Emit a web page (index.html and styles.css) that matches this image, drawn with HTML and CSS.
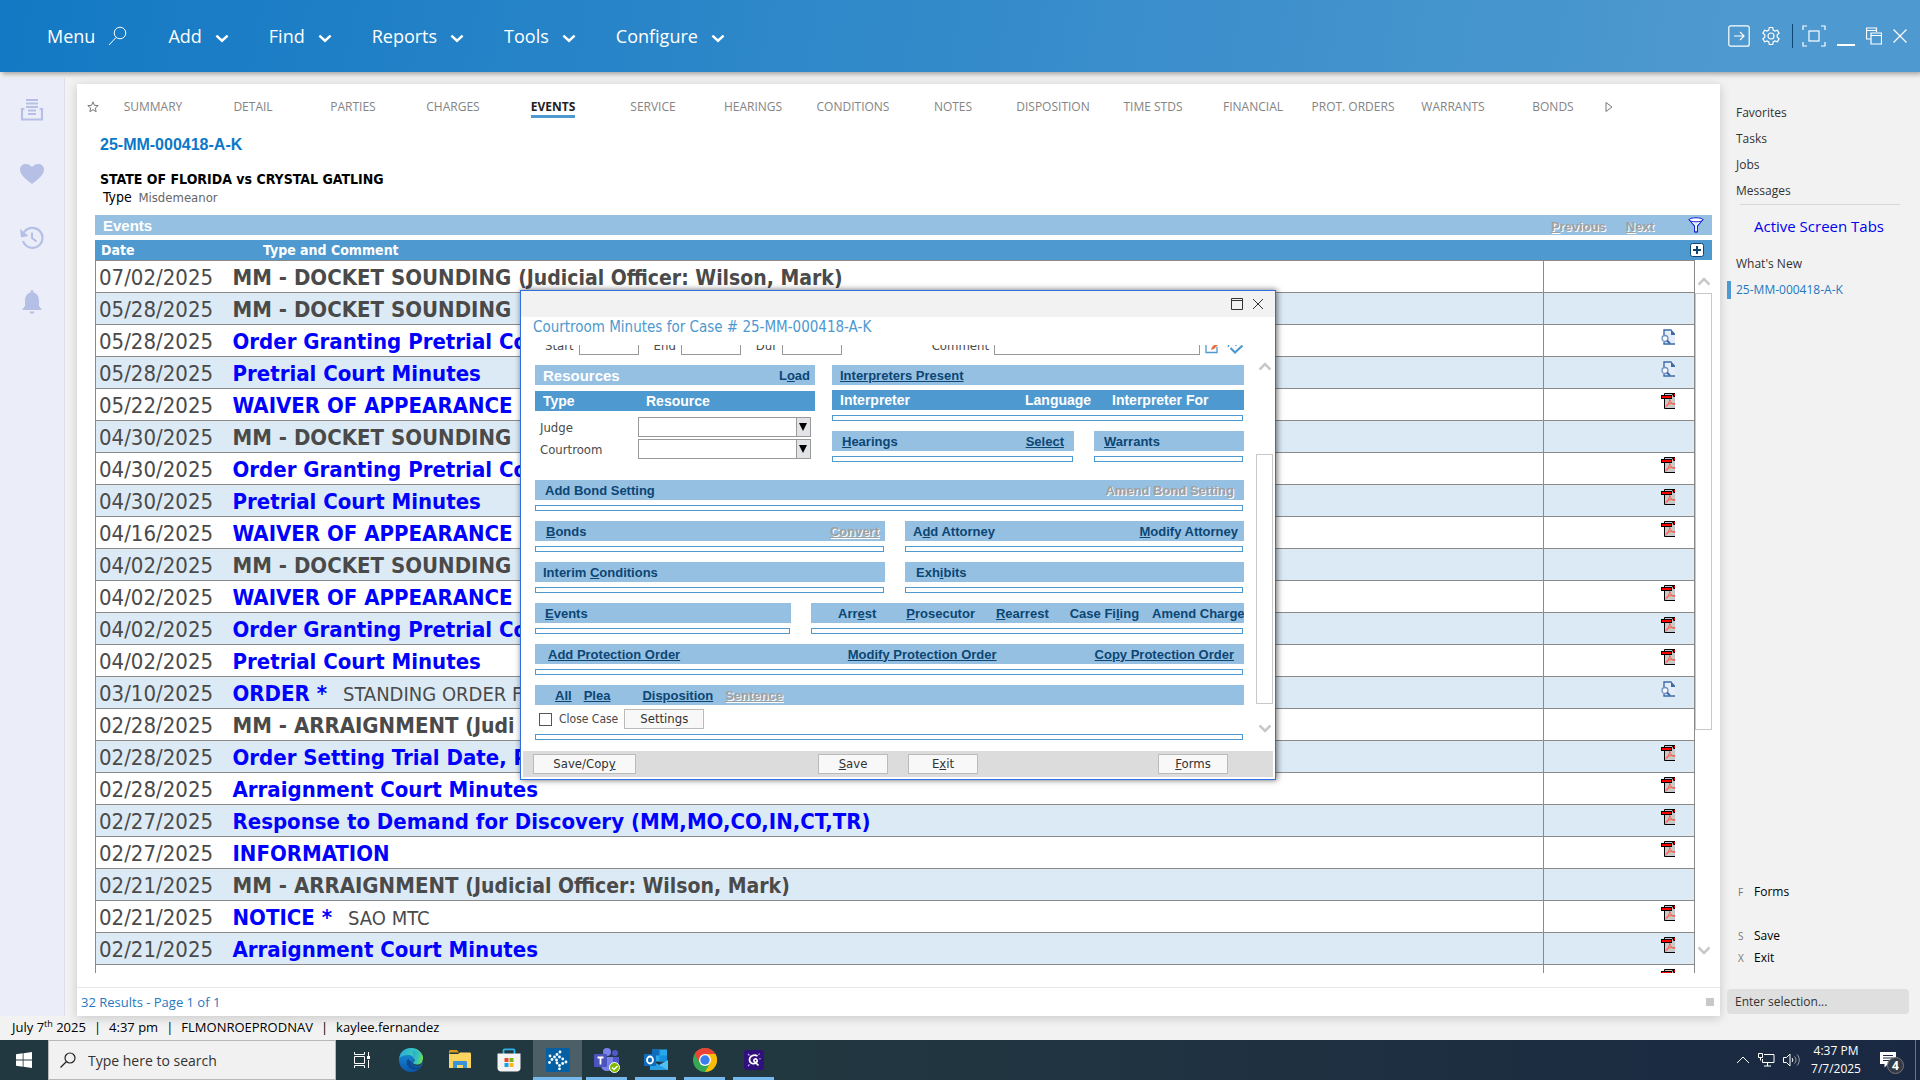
FILE: index.html
```html
<!DOCTYPE html>
<html lang="en">
<head>
    <meta charset="UTF-8">
    <meta name="viewport" content="width=device-width, initial-scale=1.0">
    <title>25-MM-000418-A-K</title>
    <link rel="stylesheet" href="styles.css">
</head>
<body>

<!-- shared icons -->
<svg class="defs" aria-hidden="true">
    <symbol id="chev" viewBox="0 0 12 8"><path d="M1 1.500l5 4.500 5-4.500" fill="none" stroke="currentColor" stroke-width="2.200"/></symbol>
    <symbol id="sb-up" viewBox="0 0 12 9"><path d="M.5 7.500L6 2l5.500 5.500" fill="none" stroke="#c8c8c8" stroke-width="2.600"/></symbol>
    <symbol id="sb-down" viewBox="0 0 12 9"><path d="M.5 1.500L6 7l5.500-5.500" fill="none" stroke="#c8c8c8" stroke-width="2.600"/></symbol>
    <symbol id="pdf" viewBox="0 0 14 16">
        <path d="M3.500 3V15.500H14V.5H3.500z" fill="#c8c8c8"/>
        <path d="M3.500 6v9.500H14M3.500 2V.5H14" fill="none" stroke="#000"/>
        <path d="M11 1h3v3h-1.500z" fill="#000"/><path d="M13 1h1v2h-1z" fill="#f00"/>
        <rect x=".5" y="2.500" width="10" height="3" fill="#f00" stroke="#000"/>
        <path d="M4.500 14c2-1 4-4.500 4.200-7.500.8 3 2.300 4.800 5.300 5M5 12.500c3-2 6-2.300 9-1.800" fill="none" stroke="#ff5a4a"/>
    </symbol>
    <symbol id="doc" viewBox="0 0 14 16">
        <path d="M3 1h7l4 4v10H3z" fill="#e6edf8"/>
        <path d="M3 6V1h7.500M3 13v2h11" fill="none" stroke="#3c6aa8" stroke-width="1.400"/>
        <path d="M10 .5l4 4v1.500h-4z" fill="#3c6aa8"/>
        <circle cx="4" cy="9.500" r="3" fill="#f4f8fd" stroke="#6d93c4" stroke-width="1.300"/>
        <path d="M6 11.500l3 3" stroke="#3c6aa8" stroke-width="2"/>
    </symbol>
</svg>

<header class="topbar">
    <nav class="menu">
        <button>Menu <svg class="mag" viewBox="0 0 20 20"><circle cx="12" cy="7" r="5.800"/><path d="M8 11.500L1 19"/></svg></button>
        <button>Add <svg class="chev"><use href="#chev"/></svg></button>
        <button>Find <svg class="chev"><use href="#chev"/></svg></button>
        <button>Reports <svg class="chev"><use href="#chev"/></svg></button>
        <button>Tools <svg class="chev"><use href="#chev"/></svg></button>
        <button>Configure <svg class="chev"><use href="#chev"/></svg></button>
    </nav>
    <div class="win-tools">
        <button aria-label="Go"><svg width="22" height="22" viewBox="0 0 22 22"><rect x=".8" y=".8" width="20.400" height="20.400" rx="2"/><path d="M6 11h10M12 7l4 4-4 4"/></svg></button>
        <button aria-label="Settings"><svg width="20" height="20" viewBox="0 0 20 20"><circle cx="10" cy="10" r="3"/><path d="M8.300 1.500h3.400l.5 2.500 1.700 1 2.500-.8 1.700 2.900-1.900 1.700v2.400l1.900 1.700-1.700 2.900-2.500-.8-1.700 1-.5 2.500H8.300l-.5-2.500-1.700-1-2.500.8-1.700-2.900 1.900-1.700V8.800L1.900 7.100l1.700-2.900 2.500.8 1.700-1z"/></svg></button>
        <span class="divider"></span>
        <button aria-label="Full screen"><svg width="24" height="22" viewBox="0 0 24 22"><rect x="7" y="6" width="10" height="10"/><path d="M1 5V1h4M19 1h4v4M23 17v4h-4M5 21H1v-4"/></svg></button>
        <button aria-label="Minimize"><svg width="18" height="22" viewBox="0 0 18 22"><path d="M0 20h18" stroke-width="2"/></svg></button>
        <button aria-label="Restore"><svg width="16" height="18" viewBox="0 0 16 18"><path d="M4.500 12H.5V1h10v4M.5 3.500h10M5 6h10.500v11H5zM5 8.500h10.500"/></svg></button>
        <button aria-label="Close"><svg width="14" height="14" viewBox="0 0 14 14"><path d="M.5.5l13 13M13.500.5l-13 13"/></svg></button>
    </div>
</header>

<div class="workspace">
    <aside class="rail">
        <button aria-label="Records"><svg viewBox="0 0 24 24"><path d="M6 2h12M6 5.500h12M6 9h12M8 12.500h8M8 16h8" stroke-width="1.800"/><path d="M4.500 11H2v10.500h20V11h-2.500" stroke-width="2.200"/></svg></button>
        <button aria-label="Favorites"><svg viewBox="0 0 24 24"><path class="fill" d="M12 22C6 17 0 13 0 7.500 0 1.500 8 0 12 5c4-5 12-3.500 12 2.500C24 13 18 17 12 22z"/></svg></button>
        <button aria-label="History"><svg viewBox="0 0 24 24"><path d="M4 6.500A10 10 0 1 1 3 15" stroke-width="2.200"/><path class="fill" d="M0 3l1 8.500L8.500 10z"/><path d="M12 6.500V12l4.500 3.500" stroke-width="2"/></svg></button>
        <button aria-label="Alerts"><svg viewBox="0 0 24 24"><path class="fill" d="M12 0c1 0 1.500 1 1.500 2.500C17.500 3.500 19 7 19 11v5l3 4H2l3-4v-5c0-4 1.500-7.500 5.500-8.500C10.500 1 11 0 12 0zM9.500 21.500h5c-.5 3-4.500 3-5 0z"/></svg></button>
    </aside>

    <main class="panel">
        <nav class="tabs">
            <button class="star" aria-label="Add favorite"><svg viewBox="0 0 12 12"><path d="M6 .8l1.400 3.500 3.800.3-2.900 2.400.9 3.700L6 8.700l-3.200 2 .9-3.700L.8 4.600l3.800-.3z"/></svg></button>
            <a href="#">SUMMARY</a>
            <a href="#">DETAIL</a>
            <a href="#">PARTIES</a>
            <a href="#">CHARGES</a>
            <a href="#" class="active"><span>EVENTS</span></a>
            <a href="#">SERVICE</a>
            <a href="#">HEARINGS</a>
            <a href="#">CONDITIONS</a>
            <a href="#">NOTES</a>
            <a href="#">DISPOSITION</a>
            <a href="#">TIME STDS</a>
            <a href="#">FINANCIAL</a>
            <a href="#">PROT. ORDERS</a>
            <a href="#">WARRANTS</a>
            <a href="#">BONDS</a>
            <button class="more" aria-label="More tabs"><svg viewBox="0 0 8 12"><path d="M1 1.500v9L7 6z"/></svg></button>
        </nav>

        <div class="case">
            <h1>25-MM-000418-A-K</h1>
            <h2>STATE OF FLORIDA vs CRYSTAL GATLING</h2>
            <p><span>Type</span> Misdemeanor</p>
        </div>

        <section class="events">
            <div class="bar events-bar">
                <h3>Events</h3>
                <button class="link off" disabled><u>P</u>revious</button>
                <button class="link off" disabled><u>N</u>ext</button>
                <button class="icon" aria-label="Filter"><svg width="16" height="16" viewBox="0 0 16 16"><path d="M1 2.500L6.500 9v6h3V9L15 2.500z" fill="#e8f2fb"/><ellipse cx="8" cy="2.800" rx="7" ry="2" fill="#fff"/><path d="M1 2.800L6.500 9v6h3V9L15 2.800" fill="none"/></svg></button>
            </div>
            <div class="bar head events-head">
                <span>Date</span>
                <span>Type and Comment</span>
                <button class="icon" aria-label="Add event"><svg width="14" height="14" viewBox="0 0 14 14"><rect x=".5" y=".5" width="13" height="13" rx="2" fill="#fff" stroke="#0b4674"/><path d="M7 3v8M3 7h8" stroke="#0b4674" stroke-width="2"/></svg></button>
            </div>
            <div class="list">
                <div class="rows">
                    <table>
                        <colgroup><col class="c-date"><col><col class="c-doc"></colgroup>
                        <tr><td>07/02/2025</td><td><b>MM - DOCKET SOUNDING <small>(Judicial Officer: Wilson, Mark)</small></b></td><td></td></tr>
                        <tr><td>05/28/2025</td><td><b>MM - DOCKET SOUNDING</b></td><td></td></tr>
                        <tr><td>05/28/2025</td><td><a href="#">Order Granting Pretrial Co</a></td><td><svg><use href="#doc"/></svg></td></tr>
                        <tr><td>05/28/2025</td><td><a href="#">Pretrial Court Minutes</a></td><td><svg><use href="#doc"/></svg></td></tr>
                        <tr><td>05/22/2025</td><td><a href="#">WAIVER OF APPEARANCE</a></td><td><svg><use href="#pdf"/></svg></td></tr>
                        <tr><td>04/30/2025</td><td><b>MM - DOCKET SOUNDING</b></td><td></td></tr>
                        <tr><td>04/30/2025</td><td><a href="#">Order Granting Pretrial Co</a></td><td><svg><use href="#pdf"/></svg></td></tr>
                        <tr><td>04/30/2025</td><td><a href="#">Pretrial Court Minutes</a></td><td><svg><use href="#pdf"/></svg></td></tr>
                        <tr><td>04/16/2025</td><td><a href="#">WAIVER OF APPEARANCE</a></td><td><svg><use href="#pdf"/></svg></td></tr>
                        <tr><td>04/02/2025</td><td><b>MM - DOCKET SOUNDING</b></td><td></td></tr>
                        <tr><td>04/02/2025</td><td><a href="#">WAIVER OF APPEARANCE</a></td><td><svg><use href="#pdf"/></svg></td></tr>
                        <tr><td>04/02/2025</td><td><a href="#">Order Granting Pretrial Co</a></td><td><svg><use href="#pdf"/></svg></td></tr>
                        <tr><td>04/02/2025</td><td><a href="#">Pretrial Court Minutes</a></td><td><svg><use href="#pdf"/></svg></td></tr>
                        <tr><td>03/10/2025</td><td><a href="#">ORDER *</a><span>STANDING ORDER F</span></td><td><svg><use href="#doc"/></svg></td></tr>
                        <tr><td>02/28/2025</td><td><b>MM - ARRAIGNMENT <small>(Judi</small></b></td><td></td></tr>
                        <tr><td>02/28/2025</td><td><a href="#">Order Setting Trial Date, P</a></td><td><svg><use href="#pdf"/></svg></td></tr>
                        <tr><td>02/28/2025</td><td><a href="#">Arraignment Court Minutes</a></td><td><svg><use href="#pdf"/></svg></td></tr>
                        <tr><td>02/27/2025</td><td><a href="#">Response to Demand for Discovery (MM,MO,CO,IN,CT,TR)</a></td><td><svg><use href="#pdf"/></svg></td></tr>
                        <tr><td>02/27/2025</td><td><a href="#">INFORMATION</a></td><td><svg><use href="#pdf"/></svg></td></tr>
                        <tr><td>02/21/2025</td><td><b>MM - ARRAIGNMENT <small>(Judicial Officer: Wilson, Mark)</small></b></td><td></td></tr>
                        <tr><td>02/21/2025</td><td><a href="#">NOTICE *</a><span>SAO MTC</span></td><td><svg><use href="#pdf"/></svg></td></tr>
                        <tr><td>02/21/2025</td><td><a href="#">Arraignment Court Minutes</a></td><td><svg><use href="#pdf"/></svg></td></tr>
                        <tr><td></td><td></td><td><svg><use href="#pdf"/></svg></td></tr>
                    </table>
                </div>
                <div class="scroll">
                    <svg><use href="#sb-up"/></svg>
                    <div class="track"><div class="thumb"></div></div>
                    <svg><use href="#sb-down"/></svg>
                </div>
            </div>
        </section>

        <footer class="results"><span>32 Results - Page 1 of 1</span><i></i></footer>
    </main>

    <aside class="side">
        <a href="#">Favorites</a>
        <a href="#">Tasks</a>
        <a href="#">Jobs</a>
        <a href="#">Messages</a>
        <h3>Active Screen Tabs</h3>
        <a href="#">What's New</a>
        <a href="#" class="current">25-MM-000418-A-K</a>
        <div class="keys">
            <button><kbd>F</kbd>Forms</button>
            <button class="gap"><kbd>S</kbd>Save</button>
            <button><kbd>X</kbd>Exit</button>
        </div>
        <input type="text" placeholder="Enter selection..." aria-label="Enter selection">
    </aside>
</div>

<div class="status">
    <span>July 7<sup>th</sup> 2025</span><span>4:37 pm</span><span>FLMONROEPRODNAV</span><span>kaylee.fernandez</span>
</div>

<div class="taskbar">
    <button class="start" aria-label="Start"><svg width="16" height="16" viewBox="0 0 16 16"><path fill="#fff" d="M0 2.300l6.700-1v6.300H0zM7.500 1.200L16 0v7.600H7.500zM0 8.400h6.700v6.300L0 13.700zM7.500 8.400H16V16l-8.500-1.200z"/></svg></button>
    <label class="search">
        <svg width="16" height="16" viewBox="0 0 16 16"><circle cx="10" cy="6" r="5"/><path d="M6.500 9.500L.5 15.500"/></svg>
        <input type="text" placeholder="Type here to search">
    </label>
    <button class="app" aria-label="Task view"><svg width="16" height="16" viewBox="0 0 16 16" fill="none" stroke="#fff"><path d="M.5 0v2.500h10V0M.5 16v-2.500h10V16M.5 4.500h10v7H.5zM14.500 0v4M14.500 8v8"/><path d="M13 4h3v3h-3z" fill="#fff" stroke="none"/></svg></button>
    <button class="app" aria-label="Edge"><svg width="24" height="24" viewBox="0 0 24 24">
        <defs>
            <linearGradient id="e1" x1="0" y1="0" x2="1" y2=".4"><stop offset="0" stop-color="#2aa5dc"/><stop offset=".6" stop-color="#36c6bd"/><stop offset="1" stop-color="#6fdc4b"/></linearGradient>
            <linearGradient id="e2" x1="0" y1="0" x2="0" y2="1"><stop offset="0" stop-color="#1896dc"/><stop offset="1" stop-color="#0d57ac"/></linearGradient>
        </defs>
        <circle cx="12" cy="12" r="12" fill="url(#e2)"/>
        <path d="M.2 10.500C1 4 6 0 12 0c7 0 12 5 12 10.500 0 4-3 6-6 6-3.500 0-4.500-1.500-3.500-3 1.500-2.500-.5-6.500-5-6.500C5 7 1.500 8.500.2 10.500z" fill="url(#e1)"/>
        <path d="M9 11c-3 3-1 10 6 11 3 .2 6-1.500 7.500-4-5 2.500-11 .5-10-4z" fill="#0b4a94"/>
        <path d="M24 13c-1 3-3.500 4-6.500 4-3 0-4.500-1.500-3.300-3.500.8-1.300.8-2.600 0-3.500L24 11z" fill="#233941" opacity=".9"/>
        <path d="M14 10c2 1 2.500 3-.3 4.500C14 17 18 18 22.500 15L24 11c0-6-5-9-10-8z" fill="url(#e1)"/>
        <path d="M13.500 14c.3 2.500 5 4 9.300 1.500-1 2.500-5 3-7 2.300-2-.8-3-2.200-2.300-3.800z" fill="#233941"/>
    </svg></button>
    <button class="app" aria-label="File Explorer"><svg width="22" height="20" viewBox="0 0 22 20"><path d="M0 1.500C0 .5.500 0 1.500 0H8l2 2.500H1L0 5z" fill="#d99a16"/><path d="M0 4h9l2-1.500h9.500c1 0 1.500.5 1.500 1.500v14H0z" fill="#fcd462"/><path d="M4 18v-5.500C4 11.500 4.500 11 5.500 11h11c1 0 1.500.5 1.500 1.500V18h-4v-3H8v3z" fill="#3c92d6"/></svg></button>
    <button class="app" aria-label="Store"><svg width="24" height="24" viewBox="0 0 24 24"><path d="M6.500 6V2.500c0-.8.500-1.200 1.200-1.200h8.600c.7 0 1.200.4 1.200 1.200V6" fill="none" stroke="#2bb5ee" stroke-width="1.800"/><path d="M.5 5.500h23V20c0 2-1.500 3.500-3.500 3.500H4C2 23.500.5 22 .5 20z" fill="#f4f4f4"/><path d="M7.500 10h4v4h-4z" fill="#e8482c"/><path d="M12.500 10h4v4h-4z" fill="#7cb518"/><path d="M7.500 15h4v4h-4z" fill="#1d9fe8"/><path d="M12.500 15h4v4h-4z" fill="#fcb714"/></svg></button>
    <button class="app open current" aria-label="Case manager"><svg width="24" height="24" viewBox="0 0 24 24"><path d="M0 0h24v24H0z" fill="#0560a3"/><g fill="#fff"><circle cx="14" cy="4" r="1.400"/><circle cx="11" cy="6.500" r="1.400"/><circle cx="8.500" cy="9" r="1.400"/><circle cx="4" cy="8" r="1.400"/><circle cx="6" cy="11.500" r="1.400"/><circle cx="3.500" cy="14.500" r="1.400"/><circle cx="10.500" cy="12" r="1.400"/><circle cx="13.500" cy="9" r="1.400"/><circle cx="16.700" cy="11" r="1.400"/><circle cx="20" cy="14" r="1.400"/><circle cx="16.700" cy="15.500" r="1.400"/><circle cx="11" cy="15" r="1.400"/><circle cx="13.500" cy="17.500" r="1.400"/><circle cx="13.500" cy="20.800" r="1.400"/></g></svg></button>
    <button class="app open" aria-label="Teams"><svg width="26" height="26" viewBox="0 0 26 26"><circle cx="13" cy="5" r="4" fill="#7b83eb"/><circle cx="21" cy="6" r="3" fill="#5059c9"/><path d="M17 10h8v7c0 3-2 5-5 5z" fill="#5059c9"/><path d="M7 10h12v8c0 4-3 6-6 6s-6-2-6-6z" fill="#7b83eb"/><rect y="7" width="13" height="13" rx="1" fill="#4b53bc"/><path d="M3.500 10.500h6M6.500 10.500v7" stroke="#fff" stroke-width="1.800"/><circle cx="20.500" cy="20.500" r="5" fill="#7fba00" stroke="#fff"/><path d="M18 20.500l2 2 3.500-3.500" fill="none" stroke="#fff" stroke-width="1.500"/></svg></button>
    <button class="app open" aria-label="Outlook"><svg width="24" height="24" viewBox="0 0 24 24"><path d="M8 1.500h15v12H8z" fill="#28a8ea"/><path d="M8 1.500h7.500v6H8z" fill="#0f6cbd"/><path d="M15.500 7.500H23v6h-7.500z" fill="#1490df"/><path d="M6 12l9 5 9-5v10H6z" fill="#50c0f5"/><path d="M6 12l18 10H6z" fill="#2a9fe4"/><rect y="6" width="12" height="12" rx="1" fill="#0f6cbd"/><ellipse cx="6" cy="12" rx="3" ry="3.500" fill="none" stroke="#fff" stroke-width="1.800"/></svg></button>
    <button class="app open" aria-label="Chrome"><svg width="24" height="24" viewBox="0 0 24 24"><circle cx="12" cy="12" r="12" fill="#34a853"/><path d="M1.600 6A12 12 0 0 1 22.400 6H12L6.800 15z" fill="#ea4335"/><path d="M22.400 6A12 12 0 0 1 12 24l5.200-9L12 6z" fill="#fbbc05"/><circle cx="12" cy="12" r="6" fill="#fff"/><circle cx="12" cy="12" r="4.700" fill="#3b7ded"/></svg></button>
    <button class="app open" aria-label="Recorder"><svg width="20" height="20" viewBox="0 0 20 20"><rect width="20" height="20" rx="3" fill="#30107a"/><path d="M13.500 6c-3.500-2-8 0-8 3.800s4.500 5 7 2.700c1.500-1.500.5-4-1.500-3.500-1.500.5-1.500 2.500 0 3l3.500 3.500" fill="none" stroke="#fff" stroke-width="1.700"/><path d="M4 4l1.500 1.500M15.500 3.500l-1 1.500M4 16l1.500-1.500M16 8v1.500" stroke="#c9a6f5" stroke-width="1.200"/></svg></button>

    <div class="tray">
        <svg width="14" height="8" viewBox="0 0 14 8"><path d="M1 7l6-6 6 6"/></svg>
        <svg width="17" height="14" viewBox="0 0 17 14"><path d="M6 1.500h10v8H4.500V6M9.500 9.500v3.500M6 13h7M.5.5h4v4h-4zM2.500 4.500v3"/></svg>
        <svg width="17" height="14" viewBox="0 0 17 14"><path d="M.5 4.500h3L7 1v12L3.500 9.500h-3zM9 5c1 1 1 3 0 4"/><path d="M11.500 3.500c2 2 2 5 0 7M14 1.500c3 3 3 8 0 11" opacity=".55"/></svg>
        <time>4:37 PM<br>7/7/2025</time>
        <button class="notes" aria-label="4 notifications"><svg width="16" height="18" viewBox="0 0 16 18"><path d="M0 1h16v12h-8l-3.500 3.500V13H0z" fill="#fff" stroke="none"/><path d="M3 4.500h10M3 7h10M3 9.500h7" stroke="#1b2943"/></svg><span>4</span></button>
    </div>
</div>

<!-- courtroom minutes window -->
<div class="dialog" role="dialog" aria-labelledby="dlg-title">
    <div class="dlg-top">
        <button aria-label="Maximize"><svg width="12" height="12" viewBox="0 0 12 12"><path d="M.5.5h11v11H.5zM.5 2.500h11"/></svg></button>
        <button aria-label="Close"><svg width="12" height="12" viewBox="0 0 12 12"><path d="M1 1l10 10M11 1L1 11"/></svg></button>
    </div>
    <h2 id="dlg-title">Courtroom Minutes for Case # 25-MM-000418-A-K</h2>
    <div class="dlg-body">
        <form class="dlg-form" id="minutes">
            <div class="times">
                <label for="start">Start</label><input type="text" id="start">
                <label for="end">End</label><input type="text" id="end">
                <label for="dur">Dur</label><input type="text" id="dur">
                <label for="comment" class="push">Comment</label><input type="text" id="comment">
                <svg width="14" height="20" viewBox="0 0 14 20"><path d="M1 8v9.500h11V12M1 8h6" fill="none" stroke="#4e99cf" stroke-width="1.300"/><path d="M6 15l1-3 5-5 2 2-5 5z" fill="#e8703a"/></svg>
                <svg width="16" height="20" viewBox="0 0 16 20"><path d="M1 12L4 5M9 6v5" fill="none" stroke="#4e99cf" stroke-width="1.400"/><path d="M3.500 13l4.500 4.500 7.500-7" fill="none" stroke="#4e99cf" stroke-width="2.200"/></svg>
            </div>

            <div class="two">
                <div class="res">
                    <div class="bar"><h3>Resources</h3><button type="button" class="link">L<u>o</u>ad</button></div>
                    <div class="bar head cols"><span>Type</span><span>Resource</span></div>
                    <div class="pick"><label for="judge">Judge</label><select id="judge"><option></option></select></div>
                    <div class="pick"><label for="courtroom">Courtroom</label><select id="courtroom"><option></option></select></div>
                </div>
                <div class="interp">
                    <div class="bar"><button type="button" class="link ul">Interpreters Present</button></div>
                    <div class="bar head cols3"><span>Interpreter</span><span>Language</span><span>Interpreter For</span></div>
                    <div class="slot"></div>
                    <div class="hw">
                        <div><div class="bar wide"><button type="button" class="link"><u>H</u>earings</button><button type="button" class="link ul end">Select</button></div><div class="slot"></div></div>
                        <div><div class="bar wide"><button type="button" class="link"><u>W</u>arrants</button></div><div class="slot"></div></div>
                    </div>
                </div>
            </div>

            <div class="set first"><div class="bar wide"><button type="button" class="link">Add Bond Setting</button><button type="button" class="link off end" disabled>Amend Bond Setting</button></div><div class="slot"></div></div>

            <div class="half">
                <div class="set"><div class="bar wide"><button type="button" class="link"><u>B</u>onds</button><button type="button" class="link ul off end" disabled>Convert</button></div><div class="slot"></div></div>
                <div class="set"><div class="bar"><button type="button" class="link">A<u>d</u>d Attorney</button><button type="button" class="link end"><u>M</u>odify Attorney</button></div><div class="slot"></div></div>
                <div class="set"><div class="bar"><button type="button" class="link">Interim <u>C</u>onditions</button></div><div class="slot"></div></div>
                <div class="set"><div class="bar wide"><button type="button" class="link">Exh<u>i</u>bits</button></div><div class="slot"></div></div>
            </div>

            <div class="charge">
                <div class="set"><div class="bar wide"><button type="button" class="link"><u>E</u>vents</button></div><div class="slot"></div></div>
                <div class="set"><div class="bar acts"><button type="button" class="link">Arr<u>e</u>st</button><button type="button" class="link"><u>P</u>rosecutor</button><button type="button" class="link"><u>R</u>earrest</button><button type="button" class="link">Case Fi<u>l</u>ing</button><button type="button" class="link">Amend Char<u>g</u>e</button></div><div class="slot"></div></div>
            </div>

            <div class="set"><div class="bar orders"><button type="button" class="link ul">Add Protection Order</button><button type="button" class="link ul end">Modify Protection Order</button><button type="button" class="link ul">Copy Protection Order</button></div><div class="slot"></div></div>

            <div class="set">
                <div class="bar pleas"><button type="button" class="link ul">All</button><button type="button" class="link ul">Plea</button><button type="button" class="link ul disp">Disposition</button><button type="button" class="link ul off" disabled>Sentence</button></div>
                <div class="close"><input type="checkbox" id="close-case"><label for="close-case">Close Case</label><button type="button" class="btn">Settings</button></div>
                <div class="slot"></div>
            </div>
        </form>
        <div class="scroll">
            <svg><use href="#sb-up"/></svg>
            <div class="track"><div class="thumb"></div></div>
            <svg><use href="#sb-down"/></svg>
        </div>
    </div>
    <div class="dlg-foot">
        <button class="btn copy">Save/Cop<u>y</u></button>
        <button class="btn save"><u>S</u>ave</button>
        <button class="btn">E<u>x</u>it</button>
        <button class="btn forms"><u>F</u>orms</button>
    </div>
</div>

</body>
</html>
```

FILE: styles.css
```css
*{
    margin: 0;
    padding: 0;
    box-sizing: border-box;
}

body{
    display: flex;
    flex-direction: column;
    height: 100vh;
    overflow: hidden;
    background-color: #f2f2f2;
    color: #333;
    font-family: "Open Sans", "Noto Sans", sans-serif;
    font-size: 12px;
}

button, input, select{
    font: inherit;
    color: inherit;
    border: none;
    background: none;
    outline: none;
}

button{
    cursor: pointer;
}

a{
    color: inherit;
    text-decoration: none;
}

svg{
    display: block;
    flex: none;
}

.defs{
    position: absolute;
    width: 0;
    height: 0;
}

/* top bar */
.topbar{
    display: flex;
    justify-content: space-between;
    align-items: center;
    flex: none;
    height: 72px;
    padding: 0 13px 0 47px;
    background: linear-gradient(100deg, #1379c4, #4e99cf 90%);
    box-shadow: 2px 2px 5px rgba(0, 0, 0, 0.35);
    color: white;
    z-index: 1;
}

.menu{
    display: flex;
    gap: 40px;
}

.menu button{
    display: flex;
    align-items: center;
    gap: 13px;
    font-size: 18px;
}

.menu .mag{
    width: 20px;
    height: 20px;
    fill: none;
    stroke: white;
}

.menu .chev{
    width: 14px;
    height: 9px;
    margin-top: 4px;
}

.win-tools{
    display: flex;
    align-items: center;
    gap: 11px;
}

.win-tools svg{
    fill: none;
    stroke: white;
    stroke-width: 1.2;
}

.win-tools .divider{
    width: 1px;
    height: 24px;
    background-color: #0b4674;
    margin-right: -2px;
}

/* middle part */
.workspace{
    display: flex;
    flex: 1;
    min-height: 0;
    padding-top: 6px;
}

.rail{
    display: flex;
    flex-direction: column;
    align-items: center;
    gap: 40px;
    flex: 0 0 65px;
    padding-top: 20px;
    background-color: #ebeef8;
    border-right: 1px solid #dcdfe8;
}

.rail svg{
    width: 24px;
    height: 24px;
    fill: none;
    stroke: #b6bfe5;
}

.rail .fill{
    fill: #b6bfe5;
    stroke: none;
}

.panel{
    display: flex;
    flex-direction: column;
    flex: 1;
    min-width: 0;
    margin: 6px 7px 0 12px;
    background-color: white;
    box-shadow: 0 2px 10px rgba(0, 0, 0, 0.18);
}

.tabs{
    display: flex;
    align-items: center;
    height: 46px;
    padding: 0 0 1px 10px;
}

.tabs a{
    flex: 0 1 100px;
    text-align: center;
    color: #848484;
    white-space: nowrap;
}

.tabs .active{
    color: #222;
    font-weight: bold;
}

.active span{
    display: inline-block;
    line-height: 16px;
    margin-top: 3px;
    border-bottom: 3px solid #4e99cf;
}

.tabs svg{
    width: 12px;
    height: 12px;
    fill: none;
    stroke: #777;
}

.star{
    margin-right: 4px;
}

.case{
    padding: 5px 0 7px 23px;
    font-family: "DejaVu Sans Condensed", "DejaVu Sans", sans-serif;
}

.case h1{
    font: bold 16px/20px "Liberation Sans", sans-serif;
    color: #0b78c8;
}

.case h2{
    margin-top: 15px;
    font-size: 14px;
    line-height: 18px;
    color: black;
}

.case p{
    height: 20px;
    padding-left: 3px;
    font-size: 13px;
    line-height: 19px;
    color: #666;
}

.case p span{
    margin-right: 3px;
    font-size: 14px;
    color: black;
}

/* coloured strips */
.bar{
    display: flex;
    align-items: center;
    height: 20px;
    padding: 0 8px;
    background-color: #96c0e2;
    font: bold 13px "Liberation Sans", sans-serif;
    white-space: nowrap;
    overflow: hidden;
}

.bar.head{
    background-color: #4e99cf;
    color: white;
    font-size: 14px;
}

.bar h3{
    flex: 1;
    font-size: 15px;
    color: white;
}

.link{
    color: #0b4674;
}

.ul{
    text-decoration: underline;
}

.link.off{
    color: #a0a0a0;
    text-shadow: 1px 1px white;
    cursor: default;
}

.end{
    margin-left: auto;
}

.events{
    display: flex;
    flex-direction: column;
    flex: 1;
    min-height: 0;
    padding: 0 8px 14px 18px;
}

.events-bar .link{
    margin-right: 20px;
    padding-top: 3px;
}

.events-bar .icon{
    margin-left: 14px;
}

.events-bar svg{
    stroke: #1a24dc;
}

.bar.events-head{
    margin-top: 5px;
    padding-left: 6px;
    font-family: "DejaVu Sans Condensed", "DejaVu Sans", sans-serif;
}

.events-head span:first-child{
    width: 162px;
}

.events-head .icon{
    margin-left: auto;
}

.list{
    display: flex;
    flex: 1;
    min-height: 0;
}

.rows{
    flex: 1;
    overflow: hidden;
}

.rows table{
    width: 100%;
    table-layout: fixed;
    border-collapse: collapse;
    font-family: "DejaVu Sans Condensed", "DejaVu Sans", sans-serif;
    font-size: 22px;
    color: #4a4a4a;
    border: 1px solid #8a8a8a;
}

.c-date{
    width: 134px;
}

.c-doc{
    width: 151px;
}

.rows tr{
    height: 32px;
    border-bottom: 1px solid #8a8a8a;
}

.rows tr:nth-child(even){
    background-color: #dceaf5;
}

.rows td{
    padding: 2px 0 0 3px;
    line-height: 28px;
    white-space: nowrap;
    overflow: hidden;
}

.rows td:last-child{
    border-left: 1px solid #8a8a8a;
}

.rows a{
    font-weight: bold;
    color: #0000ff;
}

.rows small{
    font-size: 21px;
    line-height: 20px;
}

.rows td span{
    margin-left: 16px;
    font-size: 20px;
    line-height: 20px;
}

.rows svg{
    width: 14px;
    height: 16px;
    margin: 0 0 10px 114px;
}

/* scroll bars */
.scroll{
    display: flex;
    flex-direction: column;
    align-items: center;
    flex: 0 0 17px;
}

.scroll svg{
    width: 12px;
    height: 9px;
}

.track{
    flex: 1;
    width: 100%;
}

.thumb{
    height: 100%;
    border: 1px solid #c8c8c8;
    background-color: white;
}

.list .scroll{
    padding: 17px 0 18px;
}

.list .track{
    margin: 7px 0 10px;
}

.list .thumb{
    height: 68%;
}

.results{
    display: flex;
    justify-content: space-between;
    align-items: center;
    height: 29px;
    padding: 0 6px 0 4px;
    border-top: 1px solid #e6e6e6;
    color: #1f78c0;
    font-size: 13px;
}

.results i{
    width: 8px;
    height: 8px;
    background-color: #c8c8c8;
}

/* right column */
.side{
    display: flex;
    flex-direction: column;
    flex: 0 0 193px;
    padding: 22px 11px 2px 0;
}

.side a{
    padding-left: 9px;
    line-height: 26px;
}

.side h3{
    margin: 0 9px 7px 13px;
    padding-left: 14px;
    border-top: 1px solid #d8d8d8;
    color: #0000ee;
    font-size: 15px;
    font-weight: normal;
    line-height: 42px;
}

.side .current{
    margin: 4px 0;
    padding-left: 5px;
    border-left: 4px solid #4e99cf;
    line-height: 18px;
    color: #1f78c0;
}

.side h3 + a{
    line-height: 20px;
    margin-bottom: 3px;
}

.keys{
    display: flex;
    flex-direction: column;
    margin: auto 0 20px 11px;
}

.keys button{
    display: flex;
    line-height: 22px;
    color: black;
}

.keys .gap{
    margin-top: 22px;
}

.keys kbd{
    width: 16px;
    font: 10px/22px "Open Sans", sans-serif;
    text-align: left;
    color: #777;
}

.side input{
    height: 25px;
    padding: 0 8px;
    border-radius: 4px;
    background-color: #dfdfdf;
    font-size: 12px;
}

.side input::placeholder{
    color: #333;
}

.status{
    display: flex;
    align-items: center;
    flex: none;
    height: 24px;
    padding: 0 0 2px 12px;
    color: black;
    font-size: 13px;
}

.status span + span::before{
    content: "|";
    margin: 0 8px;
}

.status sup{
    font-size: 9px;
    line-height: 1px;
}

/* task bar */
.taskbar{
    display: flex;
    flex: none;
    height: 40px;
    background: linear-gradient(90deg, #223840, #223840 40%, #1a2842);
    color: white;
}

.start{
    display: flex;
    align-items: center;
    justify-content: center;
    width: 48px;
}

.search{
    display: flex;
    align-items: center;
    gap: 12px;
    width: 288px;
    margin-right: 1px;
    padding-left: 11px;
    border: 1px solid #b8b8b8;
    background-color: #f1f1f1;
}

.search svg{
    fill: none;
    stroke: #222;
    stroke-width: 1.2;
}

.search input{
    flex: 1;
    min-width: 0;
    font-size: 14px;
}

.search input::placeholder{
    color: #333;
}

.app{
    display: flex;
    align-items: center;
    justify-content: center;
    width: 49px;
}

.open{
    width: 41px;
    margin: 0 4px;
    border-bottom: 3px solid #76b9ed;
    padding-top: 3px;
}

.app.current{
    width: 49px;
    margin: 0;
    background-color: #4c5f66;
}

.tray{
    display: flex;
    align-items: center;
    gap: 8px;
    margin-left: auto;
    margin-right: 4px;
    padding-right: 12px;
    border-right: 1px solid #6b7487;
}

.tray svg{
    fill: none;
    stroke: white;
}

.tray time{
    width: 56px;
    line-height: 18px;
    text-align: center;
}

.notes{
    position: relative;
    margin-left: 8px;
    padding-right: 7px;
}

.notes span{
    position: absolute;
    left: 7px;
    top: 6px;
    width: 17px;
    border: 1px solid #777;
    border-radius: 50%;
    background-color: #333a45;
    color: white;
    font-weight: bold;
    line-height: 15px;
}

/* dialog window, floats over the page */
.dialog{
    position: absolute;
    left: 520px;
    top: 290px;
    width: 756px;
    display: flex;
    flex-direction: column;
    padding: 0 2px 2px;
    border: 1px solid #2f6fe0;
    background-color: white;
    box-shadow: 1px 0 6px rgba(0, 0, 0, 0.6);
    font-family: "DejaVu Sans Condensed", "DejaVu Sans", sans-serif;
    color: #4a4a4a;
    z-index: 2;
}

.dlg-top{
    display: flex;
    justify-content: flex-end;
    align-items: center;
    gap: 9px;
    height: 26px;
    margin: 0 -2px;
    padding-right: 11px;
    background-color: #f2f2f2;
}

.dlg-top svg{
    fill: none;
    stroke: #333;
}

.dialog h2{
    padding-left: 10px;
    color: #4e99cf;
    font-size: 15px;
    font-weight: normal;
    line-height: 20px;
}

.dlg-body{
    display: flex;
    margin-top: 8px;
    overflow: hidden;
}

.dlg-form{
    flex: 1;
    min-width: 0;
    margin-left: 12px;
    padding-bottom: 11px;
}

.dlg-body .scroll{
    margin-left: 12px;
    padding: 17px 0 18px;
}

.dlg-body .track{
    padding-top: 83px;
    margin-bottom: 20px;
}

.times{
    display: flex;
    align-items: center;
    margin: -10px 0 10px 10px;
    font-size: 13px;
}

.times label{
    margin-right: 5px;
}

.times input{
    width: 60px;
    height: 20px;
    margin-right: 15px;
    border: 1px solid #999;
}

.times .push{
    margin-left: auto;
}

.times #comment{
    width: 206px;
    margin-right: 5px;
}

.times svg:last-child{
    margin: 0 1px 0 8px;
}

.two{
    display: grid;
    grid-template-columns: 280px 1fr;
    gap: 17px;
}

.res .bar.head{
    margin: 6px 0;
}

.res .link{
    margin-right: -3px;
}

.cols span:first-child{
    width: 103px;
}

.interp .head{
    margin: 5px 0;
    display: grid;
    grid-template-columns: 185px 87px 1fr;
}

.pick{
    display: flex;
    align-items: center;
    height: 20px;
    margin-bottom: 2px;
    padding: 0 4px 0 5px;
}

.pick label{
    width: 98px;
    font-size: 13px;
}

.pick select{
    flex: 1;
    height: 20px;
    appearance: none;
    border: 1px solid #999;
    background:
        url("data:image/svg+xml,%3Csvg xmlns='http://www.w3.org/2000/svg' width='8' height='8'%3E%3Cpath d='M0 0h8L4 8z'/%3E%3C/svg%3E") no-repeat right 3px center,
        linear-gradient(#999, #999) no-repeat right 13px top / 1px 100%,
        linear-gradient(#e2e3e7, #e2e3e7) no-repeat right top / 13px 100%;
}

.slot{
    height: 6px;
    margin: 5px 1px 0 0;
    border: 1px solid #4e99cf;
    background-color: white;
}

.hw{
    display: grid;
    grid-template-columns: 242px 150px;
    gap: 20px;
    margin-top: 10px;
}

.bar.wide{
    padding: 0 10px;
}

.set{
    min-width: 0;
    margin-top: 10px;
}

.set.first{
    margin-top: 18px;
}

.half{
    display: grid;
    grid-template-columns: 350px 1fr;
    column-gap: 20px;
}

.half .bar{
    padding: 0 6px 0 8px;
}

.half .bar.wide{
    padding: 0 6px 0 11px;
}

.charge{
    display: grid;
    grid-template-columns: 256px 1fr;
    gap: 20px;
}

.bar.acts{
    gap: 21px;
    padding: 0 0 0 27px;
}

.acts .link{
    flex: none;
}

.acts .link:first-child{
    margin-right: 9px;
}

.acts .link:last-child{
    margin-left: -8px;
}

.bar.orders{
    padding: 0 10px 0 13px;
}

.orders .end{
    margin-right: 98px;
}

.bar.pleas{
    gap: 12px;
    padding-left: 20px;
}

.pleas .disp{
    margin-left: 20px;
}

.close{
    display: flex;
    align-items: center;
    margin-top: 4px;
    padding-left: 4px;
}

.close input{
    appearance: none;
    width: 13px;
    height: 13px;
    margin-right: 7px;
    border: 1px solid #555;
    background-color: white;
}

.close .btn{
    width: 80px;
    margin-left: 6px;
}

.btn{
    width: 70px;
    height: 20px;
    border: 1px solid #bbb;
    background-color: #f8f8f8;
    color: #333;
    font-size: 13px;
    line-height: 18px;
}

.dlg-foot{
    display: flex;
    align-items: center;
    height: 26px;
    padding: 0 45px 0 10px;
    background-color: #dcdcdc;
}

.copy{
    width: 103px;
}

.save{
    margin: 0 20px 0 182px;
}

.forms{
    margin-left: auto;
}
```
